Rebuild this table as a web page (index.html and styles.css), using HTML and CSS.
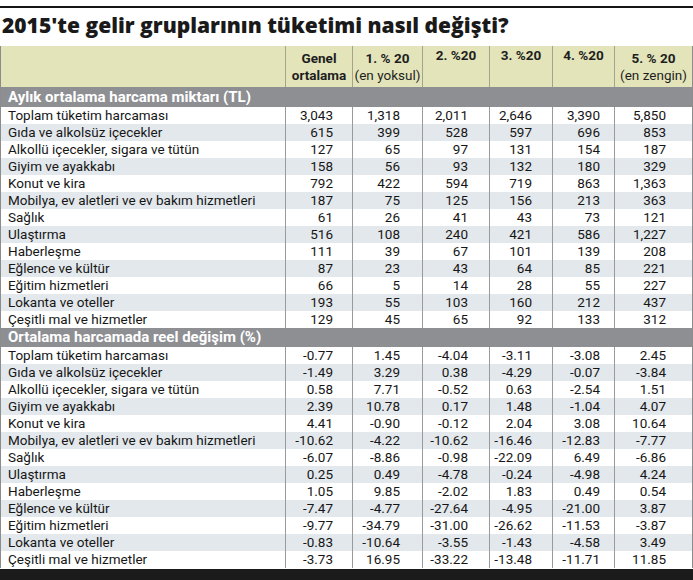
FILE: index.html
```html
<!DOCTYPE html>
<html lang="tr">
<head>
<meta charset="utf-8">
<title>2015'te gelir gruplarının tüketimi nasıl değişti?</title>
<link rel="stylesheet" href="styles.css">
</head>
<body>
<div class="page">
  <div class="topline"></div>
  <h1 class="title">2015'te gelir gruplarının tüketimi nasıl değişti?</h1>
  <table class="data">
    <colgroup>
      <col class="c-lbl"><col class="c-gen"><col class="c-q1"><col class="c-q2"><col class="c-q3"><col class="c-q4"><col class="c-q5">
    </colgroup>
    <thead>
      <tr class="head">
        <th></th>
        <th class="two"><b>Genel</b><br><b>ortalama</b></th>
        <th class="two"><b>1. % 20</b><br><span class="sub">(en yoksul)</span></th>
        <th class="one"><b>2. %20</b></th>
        <th class="one"><b>3. %20</b></th>
        <th class="one"><b>4. %20</b></th>
        <th class="two"><b>5. % 20</b><br><span class="sub">(en zengin)</span></th>
      </tr>
    </thead>
    <tbody>
      <tr class="section s1"><td colspan="7">Aylık ortalama harcama miktarı (TL)</td></tr>
      <tr><td>Toplam tüketim harcaması</td><td>3,043</td><td>1,318</td><td>2,011</td><td>2,646</td><td>3,390</td><td>5,850</td></tr>
      <tr class="alt"><td>Gıda ve alkolsüz içecekler</td><td>615</td><td>399</td><td>528</td><td>597</td><td>696</td><td>853</td></tr>
      <tr><td>Alkollü içecekler, sigara ve tütün</td><td>127</td><td>65</td><td>97</td><td>131</td><td>154</td><td>187</td></tr>
      <tr class="alt"><td>Giyim ve ayakkabı</td><td>158</td><td>56</td><td>93</td><td>132</td><td>180</td><td>329</td></tr>
      <tr><td>Konut ve kira</td><td>792</td><td>422</td><td>594</td><td>719</td><td>863</td><td>1,363</td></tr>
      <tr class="alt"><td>Mobilya, ev aletleri ve ev bakım hizmetleri</td><td>187</td><td>75</td><td>125</td><td>156</td><td>213</td><td>363</td></tr>
      <tr><td>Sağlık</td><td>61</td><td>26</td><td>41</td><td>43</td><td>73</td><td>121</td></tr>
      <tr class="alt"><td>Ulaştırma</td><td>516</td><td>108</td><td>240</td><td>421</td><td>586</td><td>1,227</td></tr>
      <tr><td>Haberleşme</td><td>111</td><td>39</td><td>67</td><td>101</td><td>139</td><td>208</td></tr>
      <tr class="alt"><td>Eğlence ve kültür</td><td>87</td><td>23</td><td>43</td><td>64</td><td>85</td><td>221</td></tr>
      <tr><td>Eğitim hizmetleri</td><td>66</td><td>5</td><td>14</td><td>28</td><td>55</td><td>227</td></tr>
      <tr class="alt"><td>Lokanta ve oteller</td><td>193</td><td>55</td><td>103</td><td>160</td><td>212</td><td>437</td></tr>
      <tr><td>Çeşitli mal ve hizmetler</td><td>129</td><td>45</td><td>65</td><td>92</td><td>133</td><td>312</td></tr>
      <tr class="section s2"><td colspan="7">Ortalama harcamada reel değişim (%)</td></tr>
      <tr><td>Toplam tüketim harcaması</td><td>-0.77</td><td>1.45</td><td>-4.04</td><td>-3.11</td><td>-3.08</td><td>2.45</td></tr>
      <tr class="alt"><td>Gıda ve alkolsüz içecekler</td><td>-1.49</td><td>3.29</td><td>0.38</td><td>-4.29</td><td>-0.07</td><td>-3.84</td></tr>
      <tr><td>Alkollü içecekler, sigara ve tütün</td><td>0.58</td><td>7.71</td><td>-0.52</td><td>0.63</td><td>-2.54</td><td>1.51</td></tr>
      <tr class="alt"><td>Giyim ve ayakkabı</td><td>2.39</td><td>10.78</td><td>0.17</td><td>1.48</td><td>-1.04</td><td>4.07</td></tr>
      <tr><td>Konut ve kira</td><td>4.41</td><td>-0.90</td><td>-0.12</td><td>2.04</td><td>3.08</td><td>10.64</td></tr>
      <tr class="alt"><td>Mobilya, ev aletleri ve ev bakım hizmetleri</td><td>-10.62</td><td>-4.22</td><td>-10.62</td><td>-16.46</td><td>-12.83</td><td>-7.77</td></tr>
      <tr><td>Sağlık</td><td>-6.07</td><td>-8.86</td><td>-0.98</td><td>-22.09</td><td>6.49</td><td>-6.86</td></tr>
      <tr class="alt"><td>Ulaştırma</td><td>0.25</td><td>0.49</td><td>-4.78</td><td>-0.24</td><td>-4.98</td><td>4.24</td></tr>
      <tr><td>Haberleşme</td><td>1.05</td><td>9.85</td><td>-2.02</td><td>1.83</td><td>0.49</td><td>0.54</td></tr>
      <tr class="alt"><td>Eğlence ve kültür</td><td>-7.47</td><td>-4.77</td><td>-27.64</td><td>-4.95</td><td>-21.00</td><td>3.87</td></tr>
      <tr><td>Eğitim hizmetleri</td><td>-9.77</td><td>-34.79</td><td>-31.00</td><td>-26.62</td><td>-11.53</td><td>-3.87</td></tr>
      <tr class="alt"><td>Lokanta ve oteller</td><td>-0.83</td><td>-10.64</td><td>-3.55</td><td>-1.43</td><td>-4.58</td><td>3.49</td></tr>
      <tr><td>Çeşitli mal ve hizmetler</td><td>-3.73</td><td>16.95</td><td>-33.22</td><td>-13.48</td><td>-11.71</td><td>11.85</td></tr>
    </tbody>
  </table>
  <div class="bottombar"></div>
</div>
</body>
</html>
```

FILE: styles.css
```css
* { box-sizing: border-box; }

html, body {
  margin: 0;
  padding: 0;
  background: #ffffff;
}

body {
  font-family: Roboto, "Liberation Sans", sans-serif;
  color: #161616;
}

.page {
  width: 693px;
  overflow: hidden;
}

.topline {
  height: 2px;
  margin-top: 6px;
  background: #151515;
}

.title {
  margin: 0;
  padding: 1px 0 5px 2px;
  font-family: "Open Sans", "Liberation Sans", sans-serif;
  font-weight: 800;
  font-size: 21px;
  line-height: 32px;
  color: #1a1a1a;
  white-space: nowrap;
}

.data {
  width: 692px;
  border-collapse: collapse;
  table-layout: fixed;
  font-size: 13.5px;
  border-left: 1px solid #8c8c8c;
  border-right: 1px solid #8c8c8c;
}

.c-lbl { width: 285px; }
.c-gen { width: 67px; }
.c-q1 { width: 70px; }
.c-q2 { width: 67px; }
.c-q3 { width: 63px; }
.c-q4 { width: 62px; }
.c-q5 { width: 78px; }

.data th,
.data td {
  padding: 0;
}

/* header */
.head {
  height: 41px;
  background: #e3e4ba;
}

.head th {
  vertical-align: top;
  text-align: center;
  font-size: 13.5px;
  line-height: 17px;
  color: #1e1e1e;
  border-left: 1px solid #a3a38f;
  white-space: nowrap;
}

.head th:first-child { border-left: none; }

.head th.two { padding-top: 4px; }
.head th.one { padding-top: 1px; }

.head b { font-weight: 700; }
.head .sub { font-weight: 400; }

/* section bars */
.section td {
  background: #8e8f93;
  color: #ffffff;
  font-family: Roboto, "Liberation Sans", sans-serif;
  font-weight: 700;
  font-size: 15px;
  padding-left: 7px;
  white-space: nowrap;
}

.section.s1 { height: 20px; }
.section.s2 { height: 19px; }
.section.s1 td { line-height: 20px; }
.section.s2 td { line-height: 19px; }

/* body rows */
tbody tr {
  height: 17px;
}

tbody td {
  line-height: 17px;
  white-space: nowrap;
}

tbody tr.alt td { background: #e3e8ec; }

tbody td:first-child {
  padding-left: 7px;
}

tbody td + td {
  text-align: right;
  border-left: 1px solid #9a9a9a;
}

tbody td:nth-child(2) { padding-right: 19px; }
tbody td:nth-child(3) { padding-right: 22px; }
tbody td:nth-child(4) { padding-right: 21px; }
tbody td:nth-child(5) { padding-right: 20px; }
tbody td:nth-child(6) { padding-right: 14px; }
tbody td:nth-child(7) { padding-right: 26px; }

.bottombar {
  height: 11px;
  margin-top: 1px;
  background: #1b1b1b;
}
```
